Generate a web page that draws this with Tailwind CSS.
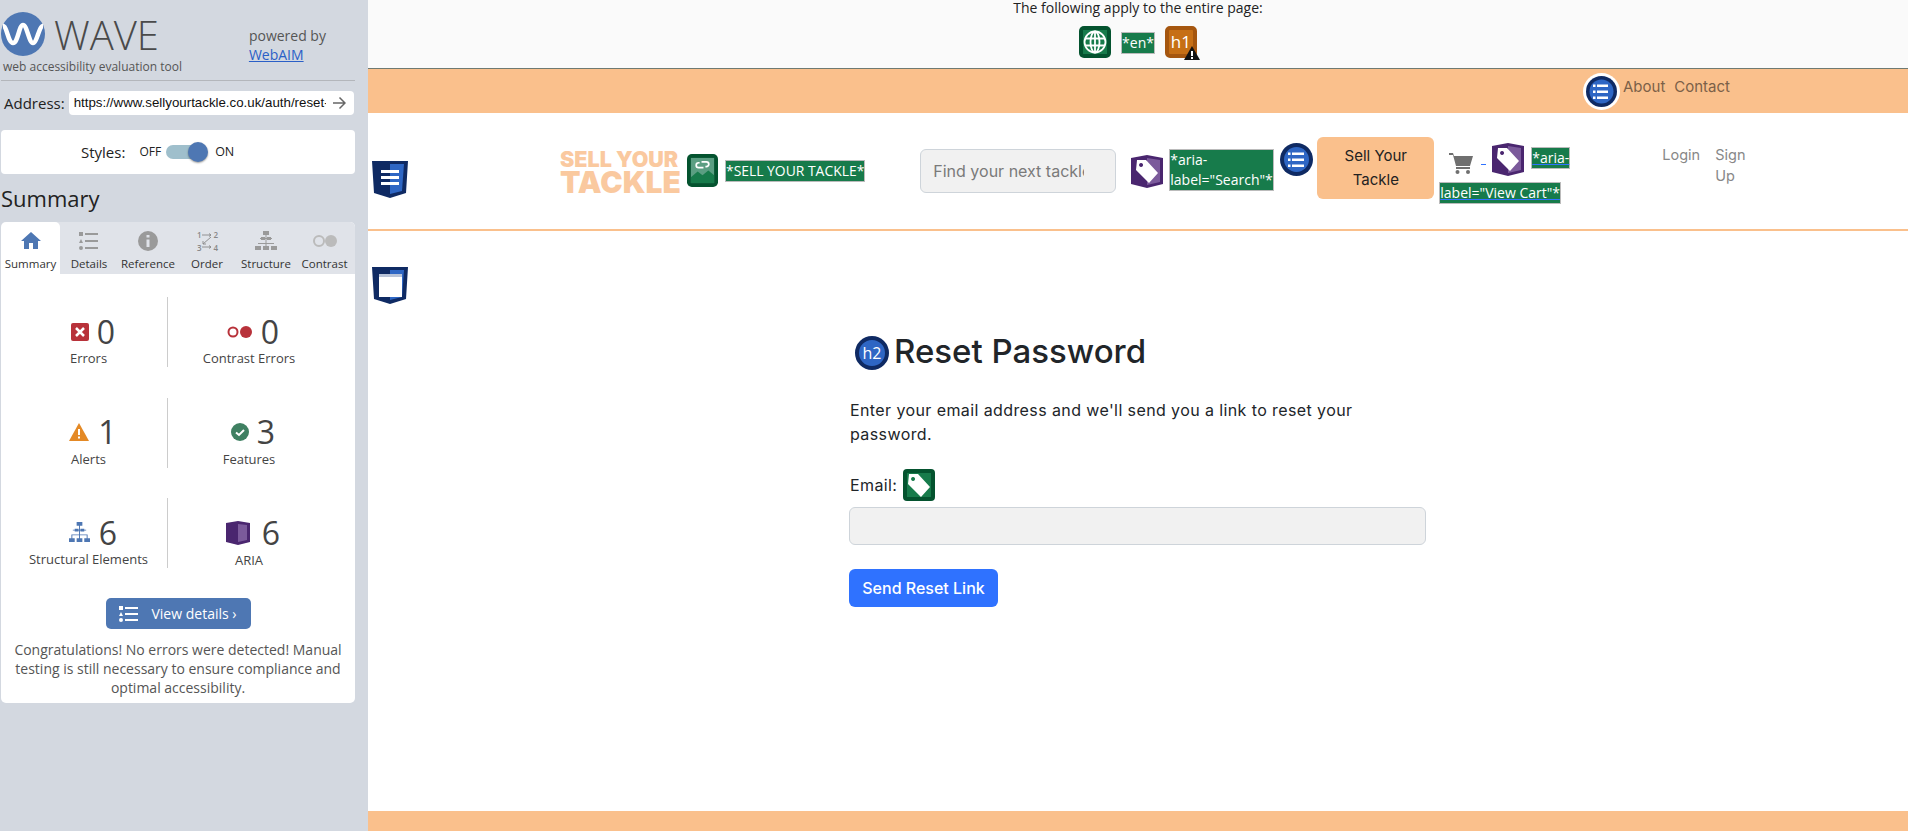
<!doctype html>
<html lang="en">
  <head>
    <meta charset="UTF-8" />
    <title>WAVE - Reset Password</title>
    <script src="https://cdn.jsdelivr.net/npm/@tailwindcss/browser@4"></script>
  </head>
  <body class="flex h-[831px] w-[1908px] overflow-hidden bg-white font-['Open_Sans',sans-serif]">
    <!-- wave sidebar -->
    <aside class="h-full w-[368px] shrink-0 bg-[#d3d8e0] pl-px pr-[13px]">
      <div class="relative h-[81px] border-b border-[#b3b6bb]">
        <div class="flex items-start pt-[12px]">
          <svg class="h-[44px] w-[44px] shrink-0" viewBox="0 0 44 44">
            <circle cx="22" cy="22" r="22" fill="#4e77b3" />
            <path d="M2 14C6 14 7 31 12 31S18 13 22 13s6 18 10 18 6-17 10-17" fill="none" stroke="#fff" stroke-width="4.500" />
          </svg>
          <span class="ml-[9px] mt-[3px] text-[40px] leading-[40px] font-light text-[#4a4a4a]">WAVE</span>
          <div class="ml-[90px] mt-[14px] text-[14px] leading-[19px] text-[#555]">
            <div class="whitespace-nowrap">powered by</div>
            <a href="#" class="text-[#2a5fc7] underline">WebAIM</a>
          </div>
        </div>
        <div class="absolute left-[2px] top-[58px] text-[12px] leading-[18px] text-[#555]">web accessibility evaluation tool</div>
      </div>
      <div class="mt-[10px] flex items-center pl-[3px]">
        <span class="text-[15px] text-[#222]">Address:</span>
        <div class="ml-[4px] flex h-[24px] w-[285px] items-center justify-between rounded-[4px] bg-white pl-[5px] pr-[8px]">
          <span class="w-[252px] overflow-hidden font-['Liberation_Sans',sans-serif] text-[13.3px] whitespace-nowrap text-[#111]">https://www.sellyourtackle.co.uk/auth/reset-</span>
          <svg class="h-[14px] w-[14px]" viewBox="0 0 14 14" fill="none" stroke="#666" stroke-width="1.5"><path d="M1 7h12M7.500 1.500 13 7l-5.500 5.500" /></svg>
        </div>
      </div>
      <div class="mt-[15px] flex h-[44px] items-center rounded-[4px] bg-white pl-[80px] text-[#222]">
        <span class="text-[15px]">Styles:</span>
        <span class="ml-[14px] text-[12px]">OFF</span>
        <span class="relative ml-[5px] h-[14px] w-[36px] rounded-full bg-[#9fbfcc]">
          <span class="absolute right-[-6px] top-[-3px] h-[20px] w-[20px] rounded-full bg-[#4e77b3] shadow-[0_1px_2px_#0006]"></span>
        </span>
        <span class="ml-[13px] text-[12.5px]">ON</span>
      </div>
      <h2 class="mt-[8px] text-[22px] leading-[32px] text-[#222]">Summary</h2>
      <div class="mt-[8px] overflow-hidden rounded-[5px] bg-white">
        <!-- tabs -->
        <div class="flex h-[52px] bg-[#e0e3e9] text-[11.5px] leading-[14px] text-[#333]">
          <div class="flex w-[59px] flex-col items-center justify-end rounded-t-[5px] bg-white pb-[3px]">
            <svg class="mb-[6px] h-[20px] w-[20px]" viewBox="0 0 20 20" fill="#4e77b3"><path d="M10 1 0 10h3v8h5v-6h4v6h5v-8h3z" /></svg>
            Summary
          </div>
          <div class="flex w-[58px] flex-col items-center justify-end pb-[3px]">
            <svg class="mb-[6px] h-[20px] w-[20px]" viewBox="0 0 20 20" fill="#9a9a9a"><path d="M0 1h4v4H0zM6 2h13v2H6zM2 8l2 4H0zM6 9h13v2H6zM2 15a2 2 0 1 1 0 4 2 2 0 0 1 0-4zM6 16h13v2H6z" /></svg>
            Details
          </div>
          <div class="flex w-[60px] flex-col items-center justify-end pb-[3px]">
            <svg class="mb-[6px] h-[20px] w-[20px]" viewBox="0 0 20 20"><circle cx="10" cy="10" r="10" fill="#9a9a9a" /><path d="M8.500 4h3v2.500h-3zM8.500 8.500h3V16h-3z" fill="#e0e3e9" /></svg>
            Reference
          </div>
          <div class="flex w-[58px] flex-col items-center justify-end pb-[3px]">
            <div class="relative mb-[6px] h-[20px] w-[20px]">
              <svg class="absolute inset-0" viewBox="0 0 20 20" fill="none" stroke="#888" stroke-width="0.9"><path d="M5 4h9M12 2.500 14 4l-2 1.500M14 6 6 13M6 10v3h3M5 16h9M12 14.500 14 16l-2 1.500" /></svg>
              <span class="absolute left-0 top-[-1px] text-[8px] leading-[9px] font-semibold text-[#888]">1</span>
              <span class="absolute right-[-1px] top-[-1px] text-[8px] leading-[9px] font-semibold text-[#888]">2</span>
              <span class="absolute bottom-[-1px] left-0 text-[8px] leading-[9px] font-semibold text-[#888]">3</span>
              <span class="absolute bottom-[-1px] right-[-1px] text-[8px] leading-[9px] font-semibold text-[#888]">4</span>
            </div>
            Order
          </div>
          <div class="flex w-[60px] flex-col items-center justify-end pb-[3px]">
            <svg class="mb-[6px] h-[20px] w-[22px]" viewBox="0 0 22 20" fill="#9a9a9a"><path d="M8 0h6v4H8zM5 7h12v1H5zM10.500 4h1v12h-1zM6 6h4v3H6zM12 6h4v3h-4zM3 12h16v1H3zM0 15h6v4H0zM8 15h6v4H8zM16 15h6v4h-6z" /></svg>
            Structure
          </div>
          <div class="flex w-[57px] flex-col items-center justify-end pb-[3px]">
            <svg class="mb-[6px] h-[20px] w-[26px]" viewBox="0 0 26 20"><circle cx="7" cy="10" r="5" fill="none" stroke="#bbb" stroke-width="2" /><circle cx="19" cy="10" r="6" fill="#bbb" /></svg>
            Contrast
          </div>
        </div>
        <!-- counts -->
        <div class="h-[429px] px-[1px] pt-[23px]">
          <div class="grid grid-cols-[166px_1fr] grid-rows-[70px_70px_70px] gap-y-[30.5px] text-center text-[13px] leading-[18px] text-[#444]">
            <div class="flex flex-col items-center border-r border-[#ccc] pl-[8px] pt-[23px]">
              <div class="ml-[9px] flex h-[34px] items-center gap-[8px] text-[32px] text-[#444]">
                <svg class="h-[18px] w-[18px]" viewBox="0 0 18 18"><rect width="18" height="18" rx="2" fill="#b8323a" /><path d="M5 5l8 8M13 5l-8 8" stroke="#fff" stroke-width="2.500" /></svg>
                0
              </div>
              <div class="mt-[6px]">Errors</div>
            </div>
            <div class="flex flex-col items-center pr-[24px] pt-[23px]">
              <div class="ml-[8px] flex h-[34px] items-center gap-[9px] text-[32px] text-[#444]">
                <svg class="h-[14px] w-[25px]" viewBox="0 0 25 14"><circle cx="6" cy="7" r="4.500" fill="none" stroke="#b8323a" stroke-width="2" /><circle cx="19" cy="7" r="6" fill="#b8323a" /></svg>
                0
              </div>
              <div class="mt-[6px]">Contrast Errors</div>
            </div>
            <div class="flex flex-col items-center border-r border-[#ccc] pl-[8px] pt-[23px]">
              <div class="ml-[9px] flex h-[34px] items-center gap-[9px] text-[32px] text-[#444]">
                <svg class="h-[18px] w-[20px]" viewBox="0 0 20 18"><path d="M10 0l10 18H0z" fill="#e48925" /><path d="M9 6h2v6H9zM9 13.500h2v2H9z" fill="#fff" /></svg>
                1
              </div>
              <div class="mt-[6px]">Alerts</div>
            </div>
            <div class="flex flex-col items-center pr-[24px] pt-[23px]">
              <div class="ml-[8px] flex h-[34px] items-center gap-[8px] text-[32px] text-[#444]">
                <svg class="h-[18px] w-[18px]" viewBox="0 0 18 18"><circle cx="9" cy="9" r="9" fill="#3f8062" /><path d="M5 9.500 8 12l5-5" fill="none" stroke="#fff" stroke-width="2" /></svg>
                3
              </div>
              <div class="mt-[6px]">Features</div>
            </div>
            <div class="flex flex-col items-center border-r border-[#ccc] pl-[8px] pt-[23px]">
              <div class="ml-[9px] flex h-[34px] items-center gap-[9px] text-[32px] text-[#444]">
                <svg class="h-[21px] w-[21px]" viewBox="0 0 22 22" fill="#4e77b3"><path d="M8 0h6v4H8zM6 7h4v3H6zM12 7h4v3h-4zM10.500 4h1v14h-1zM4 8h14v1H4zM3 13h16v1H3zM0 17h6v4H0zM8 17h6v4H8zM16 17h6v4h-6zM2.500 13h1v4h-1zM18.500 13h1v4h-1z" /></svg>
                6
              </div>
              <div class="mt-[6px]">Structural Elements</div>
            </div>
            <div class="flex flex-col items-center pr-[24px] pt-[23px]">
              <div class="ml-[8px] flex h-[34px] items-center gap-[12px] text-[32px] text-[#444]">
                <svg class="h-[24px] w-[24px]" viewBox="0 0 24 24"><path d="M0 2 12 0l12 2v19l-12 3-12-3z" fill="#4a266f" /><path d="M12 3l9 1v15l-9 2z" fill="#7b5a9b" /></svg>
                6
              </div>
              <div class="mt-[6px]">ARIA</div>
            </div>
          </div>
          <a href="#" class="mx-auto mt-[30px] flex h-[31px] w-[145px] items-center justify-center gap-[13px] rounded-[5px] bg-[#4e77b3] text-[14px] text-white">
            <svg class="h-[16px] w-[19px]" viewBox="0 0 19 16" fill="#fff"><path d="M0 0h4v4H0zM6 1h13v2H6zM2 6l2 4H0zM6 7h13v2H6zM2 12a2 2 0 1 1 0 4 2 2 0 0 1 0-4zM6 13h13v2H6z" /></svg>
            View details ›
          </a>
          <p class="mt-[11px] px-[10px] text-center text-[14px] leading-[19px] text-[#555]">Congratulations! No errors were detected! Manual testing is still necessary to ensure compliance and optimal accessibility.</p>
        </div>
      </div>
    </aside>

    <!-- page under test -->
    <div class="flex h-full min-w-0 flex-1 flex-col font-['Inter',sans-serif]">
      <div class="h-[69px] shrink-0 border-b border-[#6f7a72] bg-[#fafafa] text-center font-['Open_Sans',sans-serif]">
        <div class="text-[14px] leading-[15px] text-[#222]">The following apply to the entire page:</div>
        <div class="mt-[11px] flex items-start justify-center gap-[10px]">
          <svg class="h-[32px] w-[32px]" viewBox="0 0 32 32">
            <rect width="32" height="32" rx="5" fill="#04532f" />
            <rect x="4" y="4" width="24" height="24" fill="#177b4b" />
            <g fill="none" stroke="#fff" stroke-width="1.800"><circle cx="16" cy="16" r="10.500" /><ellipse cx="16" cy="16" rx="4.500" ry="10.500" /><path d="M16 5.500v21M6 12.500h20M6 19.500h20" /></g>
          </svg>
          <span class="mt-[6px] border border-[#bbb] bg-[#177b4b] text-[14px] leading-[20px] text-white">*en*</span>
          <div class="relative flex h-[32px] w-[32px] items-center justify-center rounded-[5px] border-[4px] border-[#a5560f] bg-[#c66f16] text-[17px] text-white">
            h1
            <svg class="absolute bottom-[-6px] right-[-7px] h-[14px] w-[16px]" viewBox="0 0 16 14"><path d="M8 0l8 14H0z" fill="#111" /><path d="M7 5h2v5H7zM7 11h2v2H7z" fill="#fff" /></svg>
          </div>
        </div>
      </div>

      <div class="flex h-[44px] shrink-0 items-center justify-end bg-[#fac08c] pr-[178px] text-[15px] text-[#7c6048]">
        <svg class="mr-[3px] h-[37px] w-[37px]" viewBox="0 0 37 37">
          <circle cx="18.500" cy="18.500" r="18.500" fill="#fff" />
          <circle cx="18.500" cy="18.500" r="15.500" fill="#0f2a63" />
          <circle cx="18.500" cy="18.500" r="12" fill="#2e66c4" />
          <path d="M14 11.500h11v2.500H14zM14 17.500h11v2.500H14zM14 23.500h11v2.500H14zM10 11.500h2.500v2.500H10zM10 17.500h2.500v2.500H10zM10 23.500h2.500v2.500H10z" fill="#fff" />
        </svg>
        <span class="mb-[8px]">About</span>
        <span class="mb-[8px] ml-[9px]">Contact</span>
      </div>

      <header class="flex h-[118px] shrink-0 items-start border-b-2 border-[#fac08c] bg-white">
        <svg class="ml-[4px] mt-[47px] h-[38px] w-[36px]" viewBox="0 0 36 38">
          <path d="M0 1h36l-2 32-16 5-16-5z" fill="#0f2a63" />
          <path d="M18 4h14l-2 27-12 3z" fill="#2e66c4" />
          <path d="M9 10h18v3H9zM9 16h18v3H9zM9 22h18v3H9z" fill="#fff" />
        </svg>
        <div class="ml-[152px] mt-[36px] flex w-[120px] flex-col font-black text-[#fac99f]">
          <span class="text-[21.500px] leading-[20px] whitespace-nowrap">SELL YOUR</span>
          <span class="text-[30px] leading-[26px]">TACKLE</span>
        </div>
        <svg class="ml-[7px] mt-[41px] h-[33px] w-[31px]" viewBox="0 0 32 34">
          <rect width="32" height="34" rx="5" fill="#04532f" />
          <rect x="4" y="4" width="24" height="26" fill="#5b9e82" />
          <path d="M4 24l7-6 5 4 6-5 6 5v8H4z" fill="#177b4b" />
          <path d="M13 9h-1a2.500 2.500 0 0 0 0 5h5M19 13h1a2.500 2.500 0 0 0 0-5h-5" fill="none" stroke="#fff" stroke-width="1.800" />
        </svg>
        <span class="ml-[7px] mt-[47px] border border-[#bbb] bg-[#177b4b] font-['Open_Sans',sans-serif] text-[13.900px] leading-[20px] whitespace-nowrap text-white">*SELL YOUR TACKLE*</span>
        <div class="ml-[55px] mt-[36px] flex h-[44px] w-[196px] items-center overflow-hidden rounded-[6px] border border-[#ced4da] bg-[#f1f1f1] pl-[12px] text-[16px] whitespace-nowrap text-[#7a7a7a]">
          <span class="w-[151px] overflow-hidden">Find your next tackle</span>
        </div>
        <svg class="ml-[15px] mt-[42px] h-[33px] w-[32px]" viewBox="0 0 32 33">
          <path d="M0 3 16 0l16 3v26l-16 4-16-4z" fill="#4a266f" />
          <path d="M16 3l13 2v22l-13 3z" fill="#7b5a9b" />
          <path d="M6 5h9l12 13-9 10L5 15zM10 8a2 2 0 1 0 .100 0z" fill="#fff" fill-rule="evenodd" />
        </svg>
        <span class="ml-[6px] mt-[36px] w-[105px] border border-[#bbb] bg-[#177b4b] font-['Open_Sans',sans-serif] text-[14px] leading-[20px] text-white">*aria-label="Search"*</span>
        <svg class="ml-[6px] mt-[30px] h-[33px] w-[33px]" viewBox="0 0 33 33">
          <circle cx="16.500" cy="16.500" r="16.500" fill="#0f2a63" />
          <circle cx="16.500" cy="16.500" r="12.500" fill="#2e66c4" />
          <path d="M12 9.500h12V12H12zM12 15.500h12V18H12zM12 21.500h12V24H12zM8 9.500h2.500V12H8zM8 15.500h2.500V18H8zM8 21.500h2.500V24H8z" fill="#fff" />
        </svg>
        <a href="#" class="ml-[4px] mt-[24px] flex h-[62px] w-[117px] items-center justify-center rounded-[6px] bg-[#fac08c] px-[16px] text-center text-[15px] leading-[24px] text-[#222]">Sell Your Tackle</a>
        <div class="relative ml-[5px] mt-[30px] h-[60px] w-[223px] shrink-0">
          <div class="flex items-start">
            <svg class="ml-[10px] mt-[9px] h-[22px] w-[24px]" viewBox="0 0 24 22" fill="#6f6f6f"><path d="M0 1h4l1 3h19l-3 10H7L4 3H0zM7 15h14v2H7z" /><circle cx="8.500" cy="20" r="2" /><circle cx="19" cy="20" r="2" /></svg>
            <span class="ml-[8px] mt-[21px] h-px w-[5px] bg-[#2f72ff]"></span>
            <svg class="ml-[6px] h-[33px] w-[32px]" viewBox="0 0 32 33">
              <path d="M0 3 16 0l16 3v26l-16 4-16-4z" fill="#4a266f" />
              <path d="M16 3l13 2v22l-13 3z" fill="#7b5a9b" />
              <path d="M6 5h9l12 13-9 10L5 15zM10 8a2 2 0 1 0 .100 0z" fill="#fff" fill-rule="evenodd" />
            </svg>
            <span class="ml-[7px] mt-[4px] border border-[#bbb] bg-[#177b4b] font-['Open_Sans',sans-serif] text-[14px] leading-[20px] whitespace-nowrap text-white underline decoration-[#2f72ff]">*aria-</span>
          </div>
          <span class="absolute left-0 top-[39px] border border-[#bbb] bg-[#177b4b] font-['Open_Sans',sans-serif] text-[14px] leading-[20px] whitespace-nowrap text-white underline decoration-[#2f72ff]">label="View Cart"*</span>
        </div>
        <a href="#" class="mt-[31px] text-[14.500px] leading-[21px] text-[#888]">Login</a>
        <a href="#" class="ml-[15px] mt-[31px] w-[40px] text-[14.500px] leading-[21px] text-[#888]">Sign Up</a>
      </header>

      <main class="relative min-h-0 flex-1 bg-white">
        <svg class="absolute left-[4px] top-[35px] h-[38px] w-[36px]" viewBox="0 0 36 38">
          <path d="M0 1h36l-2 32-16 5-16-5z" fill="#0f2a63" />
          <path d="M18 4h14l-2 27-12 3z" fill="#2e66c4" />
          <path d="M7 8h23v23H7z" fill="#fff" />
          <path d="M7 8h23v3H7z" fill="#b8c3d8" />
        </svg>
        <div class="ml-[481px] w-[577px] pt-[103px]">
          <h2 class="flex items-start text-[33px] leading-[34px] font-medium text-[#212529]">
            <span class="ml-[6px] mr-[5px] mt-[2px] flex h-[34px] w-[34px] items-center justify-center rounded-full border-[4px] border-[#0f2a63] bg-[#2e66c4] font-['Open_Sans',sans-serif] text-[16px] font-normal text-white">h2</span>
            Reset Password
          </h2>
          <p class="mt-[28px] w-[530px] pl-px text-[16px] leading-[24px] tracking-[0.4px] text-[#212529]">Enter your email address and we'll send you a link to reset your password.</p>
          <div class="mt-[23px] flex items-center pl-px text-[16px] tracking-[0.4px] text-[#212529]">
            Email:
            <svg class="ml-[6px] h-[32px] w-[32px]" viewBox="0 0 32 32">
              <rect width="32" height="32" rx="4" fill="#04532f" />
              <rect x="4" y="4" width="24" height="24" fill="#177b4b" />
              <path d="M6 5h9l12 13-9 10L5 15zM10 8a2 2 0 1 0 .100 0z" fill="#fff" fill-rule="evenodd" />
            </svg>
          </div>
          <div class="mt-[6px] h-[38px] w-[577px] rounded-[6px] border border-[#ced4da] bg-[#f1f1f1]"></div>
          <button class="mt-[24px] h-[38px] w-[149px] rounded-[6px] bg-[#2f72ff] text-[16px] font-medium text-white">Send Reset Link</button>
        </div>
      </main>

      <footer class="h-[20px] shrink-0 bg-[#fac08c]"></footer>
    </div>
  </body>
</html>
